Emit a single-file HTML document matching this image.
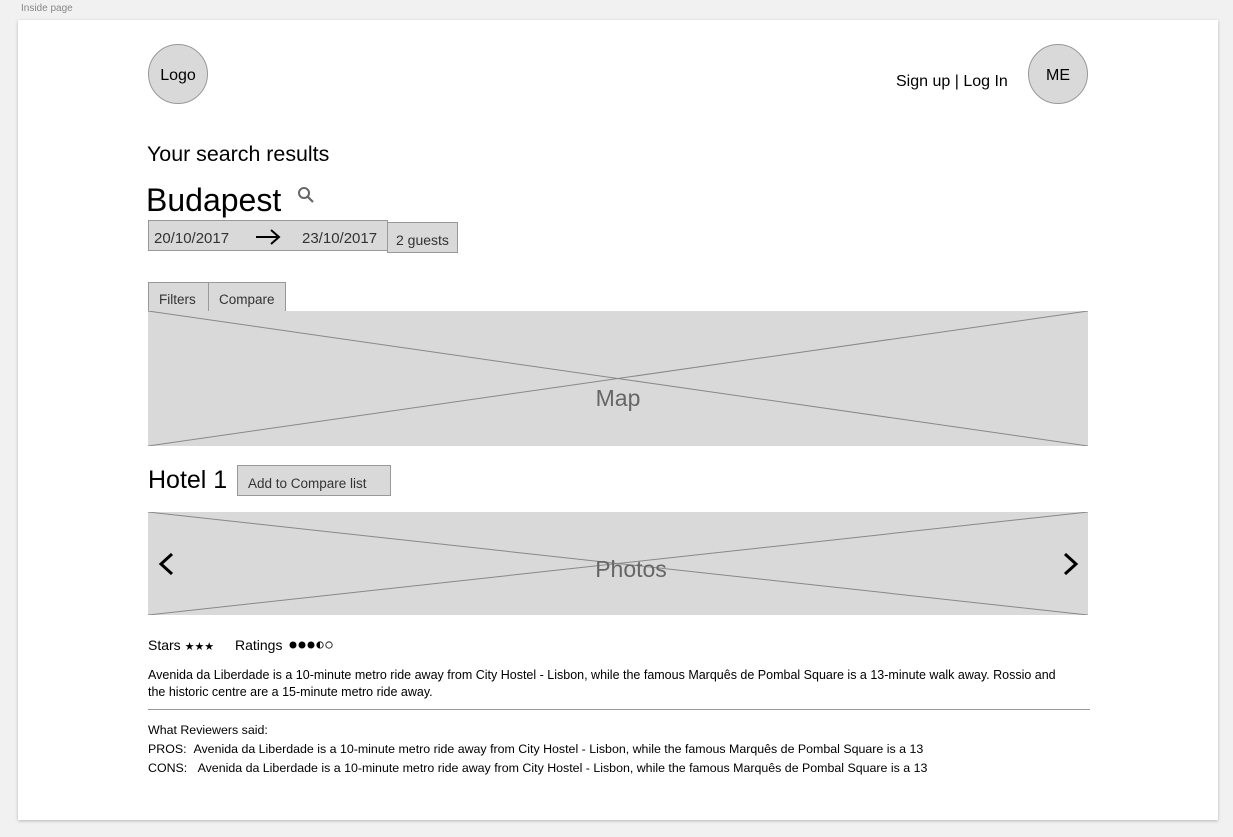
<!DOCTYPE html>
<html><head><meta charset="utf-8"><style>
body{margin:0;width:1233px;height:837px;background:#f1f1f1;font-family:"Liberation Sans",sans-serif;position:relative;overflow:hidden;color:#000}
.a{position:absolute;white-space:nowrap}
.page{position:absolute;left:18px;top:20px;width:1200px;height:800px;background:#fff;box-shadow:0 1px 3px rgba(0,0,0,.25)}
.circ{position:absolute;width:60px;height:60px;border-radius:50%;background:#d9d9d9;border:1px solid #999;box-sizing:border-box;display:flex;align-items:center;justify-content:center;font-size:16px;padding-top:4px}
.box{position:absolute;background:#d9d9d9;border:1px solid #999;box-sizing:border-box;color:#333}
</style></head><body>
<div class="a" style="left:21px;top:3px;font-size:10px;color:#888">Inside page</div>
<div class="page"></div>
<div class="circ" style="left:148px;top:44px">Logo</div>
<div class="circ" style="left:1028px;top:44px">ME</div>
<div class="a" style="left:896px;top:73px;font-size:16px">Sign up | Log In</div>
<div class="a" style="left:147px;top:142px;font-size:21.4px">Your search results</div>
<div class="a" style="left:146px;top:182px;font-size:32px">Budapest</div>
<svg class="a" style="left:297px;top:186px" width="18" height="18" viewBox="0 0 18 18"><circle cx="7" cy="7" r="5" fill="none" stroke="#666" stroke-width="2"/><path d="M10.5 10.5L16 16" stroke="#666" stroke-width="2.2"/></svg>
<div class="box" style="left:148px;top:220px;width:240px;height:31px"></div>
<div class="a" style="left:154px;top:230px;font-size:15px;color:#333">20/10/2017</div>
<div class="a" style="left:302px;top:230px;font-size:15px;color:#333">23/10/2017</div>
<svg class="a" style="left:255px;top:228px" width="26" height="18"><path d="M1 9H24M16 2L24 9L16 16" stroke="#000" stroke-width="2" fill="none"/></svg>
<div class="box" style="left:387px;top:222px;width:71px;height:31px;font-size:14px;padding:9px 0 0 8px">2 guests</div>
<div class="box" style="left:148px;top:282px;width:61px;height:30px;font-size:13.5px;padding:9px 0 0 10px">Filters</div>
<div class="box" style="left:208px;top:282px;width:78px;height:30px;font-size:13.5px;padding:9px 0 0 10px">Compare</div>
<svg class="a" style="left:148px;top:311px" width="940" height="135"><rect width="940" height="135" fill="#d9d9d9"/><path d="M0 0L940 135M0 135L940 0" stroke="#888" stroke-width="1"/><text x="470" y="95" text-anchor="middle" font-family="Liberation Sans" font-size="23" fill="#666">Map</text></svg>
<div class="a" style="left:148px;top:466px;font-size:25px">Hotel 1</div>
<div class="box" style="left:237px;top:465px;width:154px;height:31px;font-size:13.5px;padding:10px 0 0 10px">Add to Compare list</div>
<svg class="a" style="left:148px;top:512px" width="940" height="103"><rect width="940" height="103" fill="#d9d9d9"/><path d="M0 0L940 103M0 103L940 0" stroke="#888" stroke-width="1"/><text x="483" y="65" text-anchor="middle" font-family="Liberation Sans" font-size="23" fill="#666">Photos</text><path d="M24 42L13 52L24 62" stroke="#000" stroke-width="3" fill="none"/><path d="M917 42L928 52L917 62" stroke="#000" stroke-width="3" fill="none"/></svg>
<div class="a" style="left:148px;top:637px;font-size:14px">Stars <span style="font-size:11px">★★★</span></div>
<div class="a" style="left:235px;top:637px;font-size:14px">Ratings</div>
<svg class="a" style="left:289px;top:640px" width="60" height="10"><circle cx="4" cy="5" r="3.5"/><circle cx="13" cy="5" r="3.5"/><circle cx="22" cy="5" r="3.5"/><circle cx="31" cy="5" r="3.2" fill="#fff" stroke="#000" stroke-width=".8"/><path d="M31 1.8A3.2 3.2 0 0 0 31 8.2Z"/><circle cx="40" cy="5" r="3.2" fill="#fff" stroke="#000" stroke-width=".8"/></svg>
<div class="a" style="left:148px;top:667px;font-size:12.5px;line-height:17px">Avenida da Liberdade is a 10-minute metro ride away from City Hostel - Lisbon, while the famous Marquês de Pombal Square is a 13-minute walk away. Rossio and<br>the historic centre are a 15-minute metro ride away.</div>
<div class="a" style="left:148px;top:709px;width:942px;height:1px;background:#999"></div>
<div class="a" style="left:148px;top:721px;font-size:12.4px;line-height:19px">What Reviewers said:<br>PROS:&nbsp;&nbsp;Avenida da Liberdade is a 10-minute metro ride away from City Hostel - Lisbon, while the famous Marquês de Pombal Square is a 13<br>CONS:&nbsp;&nbsp;&nbsp;Avenida da Liberdade is a 10-minute metro ride away from City Hostel - Lisbon, while the famous Marquês de Pombal Square is a 13</div>
</body></html>
